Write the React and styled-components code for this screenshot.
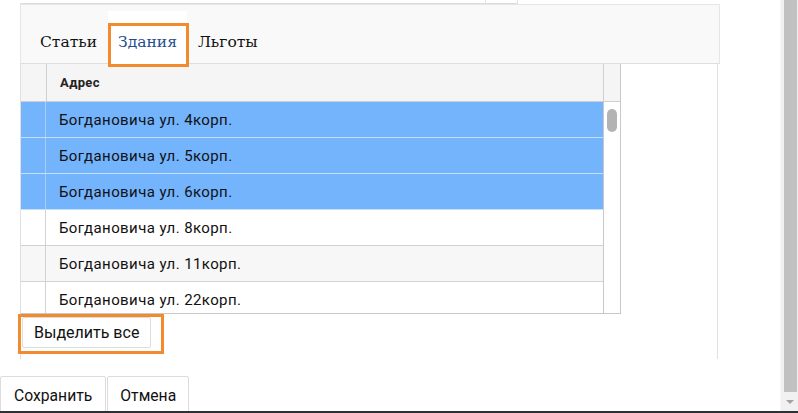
import React from "react";
import styled, { createGlobalStyle } from "styled-components";

const Global = createGlobalStyle`
  html, body { margin: 0; padding: 0; background: #fff; }
  body { font-family: Roboto, "Liberation Sans", sans-serif; color: #111; overflow: hidden; }
  * { box-sizing: border-box; }
`;

const Page = styled.div`
  width: 798px;
  height: 413px;
  display: flex;
  flex-direction: column;
`;

const Screen = styled.div`
  flex: 1;
  display: flex;
  min-height: 0;
`;

const Main = styled.div`
  flex: 1;
  display: flex;
  flex-direction: column;
`;

const TopStub = styled.div`
  margin-left: 20px;
  width: 498px;
  height: 4px;
  border-bottom: 1px solid #dcdcdc;
  display: flex;
  justify-content: flex-end;
`;

const StubButton = styled.div`
  width: 33px;
  height: 3px;
  border-left: 1px solid #e4e4e4;
  border-right: 1px solid #e4e4e4;
`;

const Panel = styled.div`
  margin-left: 20px;
  width: 700px;
  display: flex;
  flex-direction: column;
`;

const TabHeader = styled.div`
  height: 60px;
  background: #f9f9f9;
  border: 1px solid #e6e6e6;
  border-bottom: 1px solid #dedede;
  display: flex;
  align-items: flex-end;
  padding-left: 9px;
  gap: 1px;
`;

const Tab = styled.div`
  position: relative;
  height: 53px;
  padding: 0 10px 4px;
  display: flex;
  align-items: center;
  padding-top: 12px;
  font-family: "DejaVu Serif", "Liberation Serif", serif;
  font-size: 15.5px;
  color: ${(p) => (p.$active ? "#1f4f8f" : "#111")};
  background: ${(p) => (p.$active ? "#fff" : "transparent")};
  margin-bottom: -1px;
`;

const Mark = styled.div`
  position: relative;
  &::after {
    content: "";
    position: absolute;
    border: 3px solid #f28a30;
    pointer-events: none;
    top: ${(p) => p.$t}px;
    left: ${(p) => p.$l}px;
    right: ${(p) => p.$r}px;
    bottom: ${(p) => p.$b}px;
  }
`;

const Body = styled.div`
  width: 698px;
  height: 295px;
  border-left: 1px solid #e0e0e0;
  border-right: 1px solid #e0e0e0;
  display: flex;
  flex-direction: column;
  align-items: flex-start;
`;

const Grid = styled.div`
  width: 600px;
  height: 250px;
  border-right: 1px solid #c8c8c8;
  border-bottom: 1px solid #c8c8c8;
  display: flex;
  flex-direction: column;
  overflow: hidden;
`;

const HeaderRow = styled.div`
  height: 38px;
  flex: none;
  display: grid;
  grid-template-columns: 25px 1fr 17px;
  background: #f5f5f5;
  border-bottom: 1px solid #cfcfcf;
`;

const HeadCell = styled.div`
  border-left: ${(p) => (p.$sep ? "1px solid #cfcfcf" : "none")};
  font-size: 13px;
  letter-spacing: 0.4px;
  font-weight: 700;
  color: #222;
  display: flex;
  align-items: center;
  padding-left: ${(p) => (p.$pad ? "13px" : "0")};
`;

const GridBody = styled.div`
  flex: 1;
  display: flex;
  min-height: 0;
`;

const Rows = styled.div`
  flex: 1;
  display: flex;
  flex-direction: column;
`;

const Row = styled.div`
  height: 36px;
  flex: none;
  display: grid;
  grid-template-columns: 25px 1fr;
  background: ${(p) => (p.$sel ? "#73b4fd" : p.$alt ? "#f7f7f7" : "#fff")};
  border-bottom: 1px solid ${(p) => (p.$sel ? "#c6dff8" : "#d2d2d2")};
`;

const CheckCell = styled.div`
  border-right: 1px solid ${(p) => (p.$sel ? "#a9cdf5" : "#d2d2d2")};
`;

const TextCell = styled.div`
  display: flex;
  align-items: center;
  padding-left: 13px;
  font-size: 15px;
  letter-spacing: 0.4px;
  color: #111;
`;

const ScrollCol = styled.div`
  width: 17px;
  flex: none;
  border-left: 1px solid #c8c8c8;
  background: #fff;
  padding: 7px 0 0 3px;
`;

const Thumb = styled.div`
  width: 10px;
  height: 23px;
  border-radius: 5px;
  background: #b3b3b3;
`;

const SelectAllWrap = styled(Mark)`
  margin-top: 3px;
  margin-left: 1px;
`;

const Button = styled.button`
  font-family: Roboto, "Liberation Sans", sans-serif;
  font-size: ${(p) => p.$fs || 16}px;
  color: #111;
  background: #fff;
  border: 1px solid #dcdcdc;
  border-radius: 2px;
  height: ${(p) => p.$h || 31}px;
  padding: 0 ${(p) => p.$px || 11}px;
  cursor: pointer;
  display: flex;
  align-items: center;
`;

const Footer = styled.div`
  margin-top: 17px;
  display: flex;
  gap: 1px;
`;

const PageScroll = styled.div`
  width: 18px;
  flex: none;
  background: #f1f1f1;
  border-left: 1px solid #f6f6f6;
  display: flex;
  flex-direction: column;
  align-items: center;
  padding-left: 1px;
`;

const PageThumb = styled.div`
  width: 13px;
  flex: 1;
  background: #c1c1c1;
  margin-bottom: 2px;
`;

const Arrow = styled.div`
  width: 0;
  height: 0;
  border-left: 4px solid transparent;
  border-right: 4px solid transparent;
  border-top: 4px solid #a3a3a3;
  margin: 6px 0 7px;
`;

const Taskbar = styled.div`
  height: 2px;
  background: #2e3033;
`;

const rows = [
  { t: "Богдановича ул. 4корп.", sel: true },
  { t: "Богдановича ул. 5корп.", sel: true },
  { t: "Богдановича ул. 6корп.", sel: true },
  { t: "Богдановича ул. 8корп." },
  { t: "Богдановича ул. 11корп.", alt: true },
  { t: "Богдановича ул. 22корп." },
];

export default function App() {
  return (
    <Page>
      <Global />
      <Screen>
        <Main>
          <TopStub>
            <StubButton />
          </TopStub>
          <Panel>
            <TabHeader>
              <Tab>Статьи</Tab>
              <Mark $t={12} $l={0} $r={-2} $b={-4}>
                <Tab $active>Здания</Tab>
              </Mark>
              <Tab>Льготы</Tab>
            </TabHeader>
            <Body>
              <Grid>
                <HeaderRow>
                  <HeadCell />
                  <HeadCell $sep $pad>Адрес</HeadCell>
                  <HeadCell $sep />
                </HeaderRow>
                <GridBody>
                  <Rows>
                    {rows.map((r, i) => (
                      <Row key={i} $sel={r.sel} $alt={r.alt}>
                        <CheckCell $sel={r.sel} />
                        <TextCell>{r.t}</TextCell>
                      </Row>
                    ))}
                  </Rows>
                  <ScrollCol>
                    <Thumb />
                  </ScrollCol>
                </GridBody>
              </Grid>
              <SelectAllWrap $t={-3} $l={-4} $r={-13} $b={-6}>
                <Button $px={11}>Выделить все</Button>
              </SelectAllWrap>
            </Body>
          </Panel>
          <Footer>
            <Button $h={38} $fs={15.7} $px={13}>Сохранить</Button>
            <Button $h={38} $fs={15.7} $px={12}>Отмена</Button>
          </Footer>
        </Main>
        <PageScroll>
          <PageThumb />
          <Arrow />
        </PageScroll>
      </Screen>
      <Taskbar />
    </Page>
  );
}
